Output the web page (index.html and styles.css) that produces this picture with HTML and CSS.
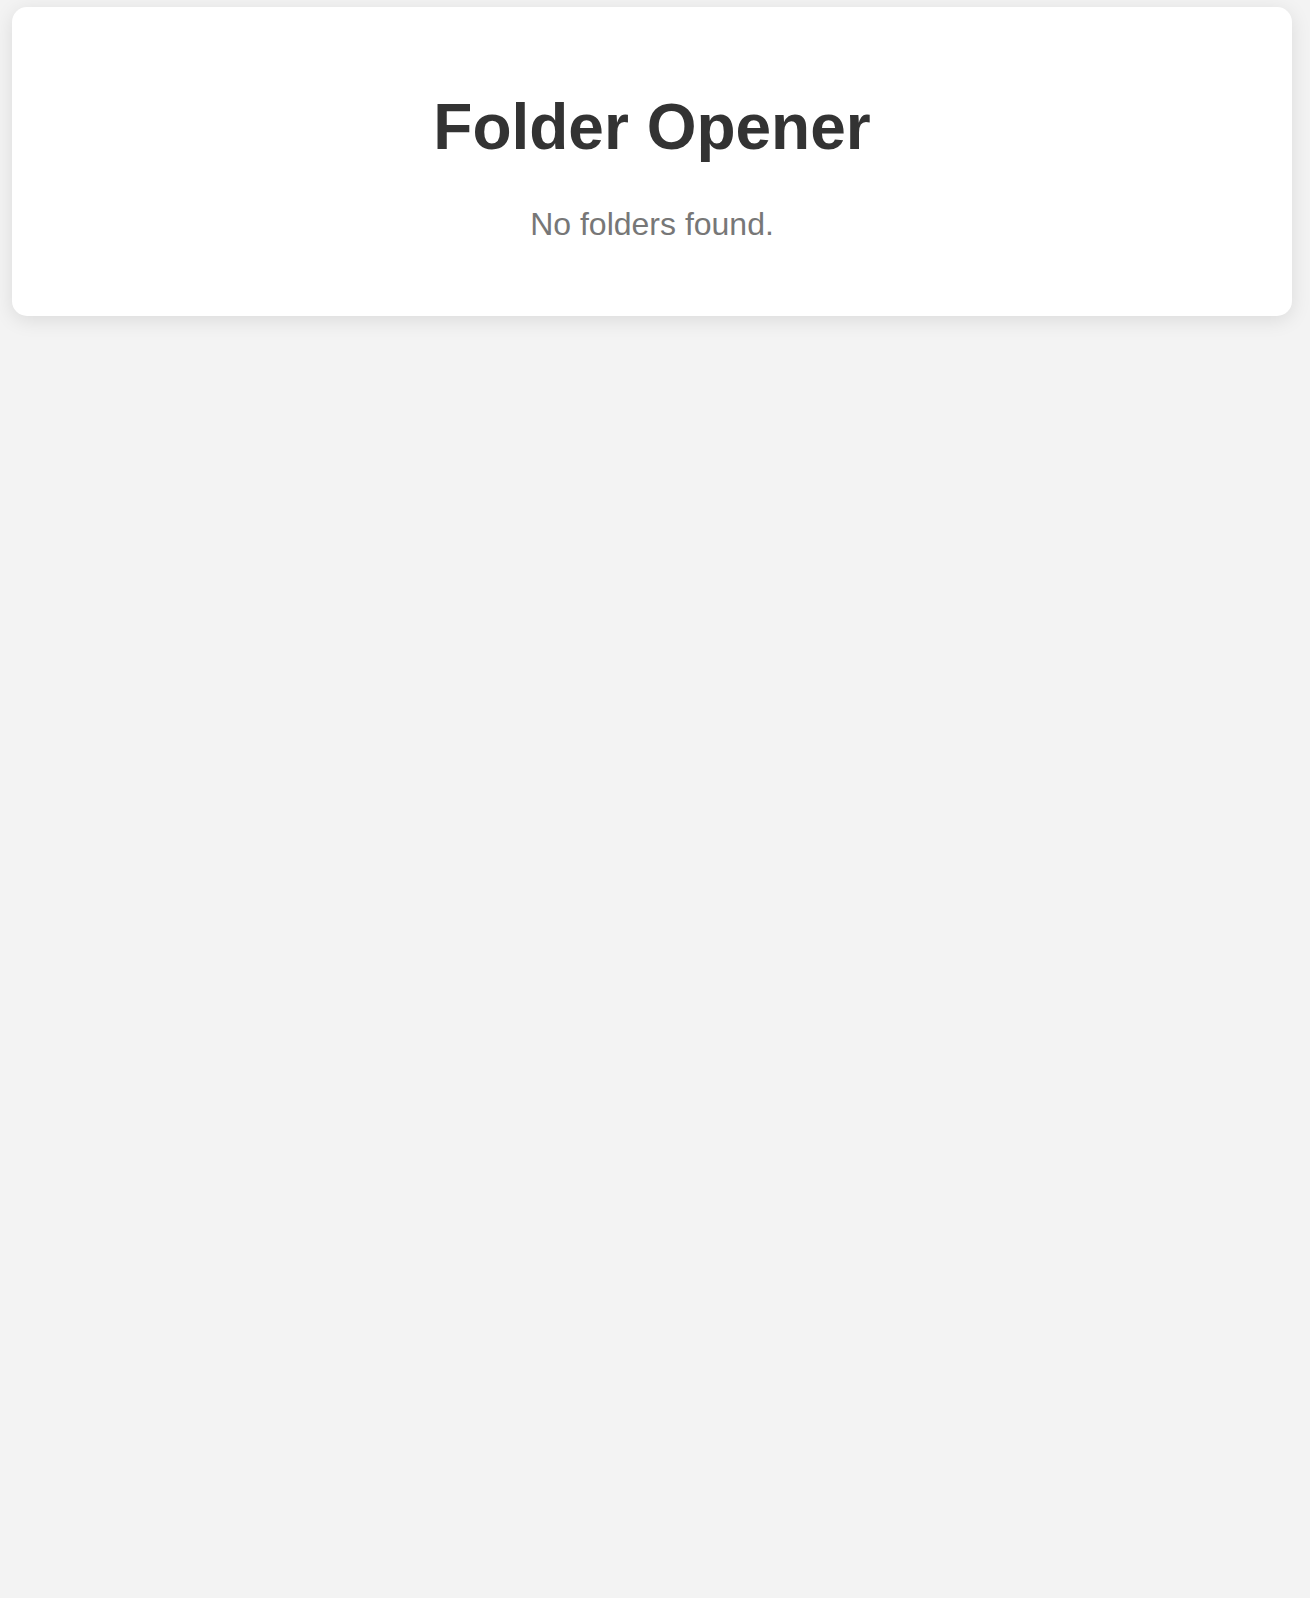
FILE: index.html
```html
<!DOCTYPE html>
<html lang="en">
<head>
<meta charset="utf-8">
<title>Folder Opener</title>
<link rel="stylesheet" href="styles.css">
</head>
<body>
<main class="card">
  <h1 class="title">Folder Opener</h1>
  <p class="empty">No folders found.</p>
</main>
</body>
</html>
```
FILE: styles.css
```css
html, body {
  margin: 0;
  padding: 0;
  background: #f3f3f3;
  font-family: "Liberation Sans", Arial, sans-serif;
}
body {
  padding: 7px 18px 0 12px;
  min-height: 1598px;
  box-sizing: border-box;
}
.card {
  display: block;
  width: 1280px;
  box-sizing: border-box;
  background: #ffffff;
  border-radius: 15px;
  box-shadow: 0 4px 20px rgba(0, 0, 0, 0.1);
  padding: 40px;
  text-align: center;
}
.title {
  margin: 43px 0 42px;
  font-size: 64px;
  font-weight: 700;
  color: #333333;
}
.empty {
  margin: 0 0 33px;
  font-size: 32px;
  color: #777777;
}
```
